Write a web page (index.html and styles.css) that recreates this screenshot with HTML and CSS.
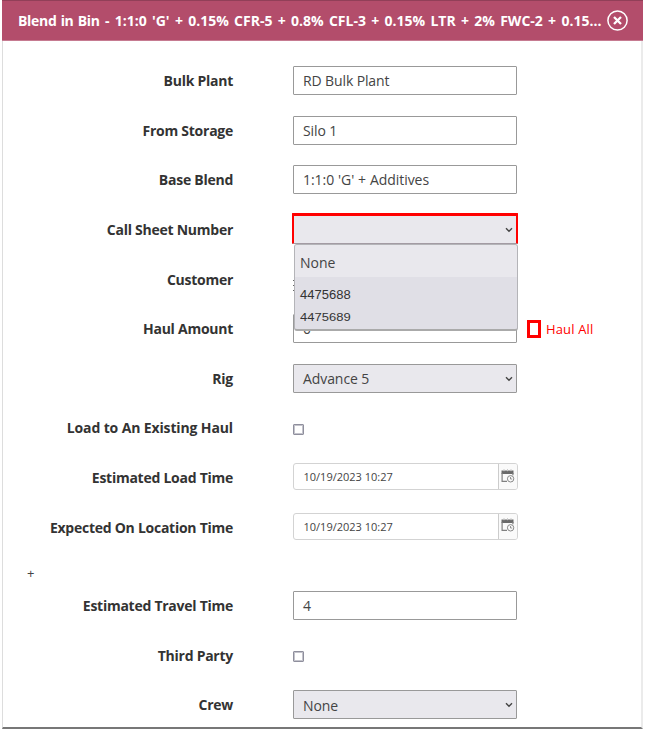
FILE: index.html
```html
<!DOCTYPE html>
<html lang="en">
<head>
<meta charset="utf-8">
<title>Blend in Bin</title>
<link rel="stylesheet" href="styles.css">
</head>
<body>
<svg class="defs" width="0" height="0" aria-hidden="true">
  <symbol id="chevron" viewBox="0 0 8 6"><path d="M1 1.2 4 4.2 7 1.2" fill="none" stroke="#444" stroke-width="1.4"/></symbol>
  <symbol id="calendar" viewBox="0 0 14 14">
    <path d="M.5 1.5h12V5H.5z" fill="#6a6a6a"/>
    <path d="M3 0v2.2M6.5 0v2.2M10 0v2.2" stroke="#ccc" stroke-width="1"/>
    <path d="M1.1 4v8.4H6M11.9 4v2.3" fill="none" stroke="#808080" stroke-width="1.2"/>
    <circle cx="9.6" cy="9.8" r="3.2" fill="#fafafa" stroke="#888" stroke-width="1"/>
    <path d="M9.5 8v2h1.7" fill="none" stroke="#888" stroke-width=".9"/>
  </symbol>
</svg>
<main class="dialog">
  <header class="titlebar">
    <h1 class="title"><span class="name">Blend in Bin</span> - 1:1:0 'G' + 0.15% CFR-5 + 0.8% CFL-3 + 0.15% LTR + 2% FWC-2 + 0.15...</h1>
    <svg class="close" viewBox="0 0 21 21"><circle cx="10.5" cy="10.5" r="9.6" fill="none" stroke="#fff" stroke-width="1.5"/><path d="m7 7 7 7m0-7-7 7" stroke="#fff" stroke-width="2.3"/></svg>
  </header>
  <form class="form">
    <div class="row"><label class="label">Bulk Plant</label><div class="box">RD Bulk Plant</div></div>
    <div class="row"><label class="label">From Storage</label><div class="box">Silo 1</div></div>
    <div class="row"><label class="label">Base Blend</label><div class="box wide">1:1:0 'G' + Additives</div></div>
    <div class="row"><label class="label">Call Sheet Number</label>
      <div class="box select invalid"><svg class="chevron"><use href="#chevron"/></svg>
        <div class="menu">
          <div class="option first">None</div>
          <div class="option">4475688</div>
          <div class="option clipped"><span class="squash">4475689</span></div>
        </div>
      </div>
    </div>
    <div class="row"><label class="label">Customer</label><span class="customer"></span></div>
    <div class="row"><label class="label">Haul Amount</label><div class="box amount">0</div><span class="haul-check"></span><span class="haul-all">Haul All</span></div>
    <div class="row"><label class="label">Rig</label><div class="box select">Advance 5<svg class="chevron"><use href="#chevron"/></svg></div></div>
    <div class="row"><label class="label long">Load to An Existing Haul</label><span class="check"></span></div>
    <div class="row"><label class="label">Estimated Load Time</label><div class="date"><span class="date-text">10/19/2023 10:27</span><span class="date-button"><svg class="calendar"><use href="#calendar"/></svg></span></div></div>
    <div class="row"><label class="label">Expected On Location Time</label><div class="date"><span class="date-text">10/19/2023 10:27</span><span class="date-button"><svg class="calendar"><use href="#calendar"/></svg></span></div></div>
    <div class="expander">+</div>
    <div class="row"><label class="label">Estimated Travel Time</label><div class="box">4</div></div>
    <div class="row"><label class="label">Third Party</label><span class="check"></span></div>
    <div class="row"><label class="label">Crew</label><div class="box select">None<svg class="chevron"><use href="#chevron"/></svg></div></div>
  </form>
</main>
</body>
</html>
```
FILE: styles.css
```css
* { box-sizing: border-box; }
body { margin: 0; background: #fff; font-family: "Open Sans", "Noto Sans", sans-serif; color: #444; overflow: hidden; }
.defs { position: absolute; }
.dialog { width: 641px; height: 729px; margin-left: 2px; border-left: 1px solid #ddd; border-right: 2px solid #ebebeb; border-bottom: 2px solid #777; }
.titlebar { display: flex; align-items: center; height: 41px; margin: 0 -2px 0 -1px; padding: 0 15px 0 16px; background: #b34d6b; border-top: 1px solid #913f58; border-bottom: 1px solid #c67b91; }
.title { margin: 0; width: 589px; font-size: 14px; line-height: 20px; font-weight: 700; letter-spacing: 0; word-spacing: 1.65px; color: #fff; white-space: nowrap; }
.name { letter-spacing: -.3px; word-spacing: .8px; }
.close { flex: none; width: 21px; height: 21px; }
.form { padding-top: 15px; }
.row { display: flex; align-items: center; height: 49.6px; }
.label { flex: none; width: 230px; margin-right: 60px; text-align: right; font-size: 14px; letter-spacing: -.26px; font-weight: 700; color: #333; white-space: nowrap; }
.long { letter-spacing: -.13px; }
.box { position: relative; display: flex; align-items: center; flex: none; width: 224px; height: 29px; padding: 1px 9px 0; border: 1px solid #999; border-radius: 1px; font-size: 14px; line-height: 20px; letter-spacing: -.12px; white-space: nowrap; }
.wide { letter-spacing: -.05px; word-spacing: .3px; }
.select { background: #e9e8ed; padding-top: 2px; letter-spacing: -.08px; }
.chevron { position: absolute; right: 3px; top: 11px; width: 8px; height: 6px; }
.invalid { z-index: 2; width: 226px; height: 31px; margin: -2px -1px 0; border: 2px solid red; border-top-width: 3px; border-bottom: 1px solid #a39ba3; }
.menu { position: absolute; left: 0; top: 28px; width: 224px; height: 87px; border: 1px solid #b4b4b8; border-bottom: 2px solid #aaa; border-radius: 3px; overflow: hidden; background: #e0dfe6; }
.option { height: 33px; padding-left: 5px; font: 13px/35px "Liberation Sans", sans-serif; letter-spacing: 0; color: #333; }
.first { height: 32px; background: #e9e8ed; font: 14px/35px "Open Sans", sans-serif; color: #444; }
.clipped { height: 16px; line-height: 16px; }
.squash { display: inline-block; transform: scaleY(.83); }
.customer { width: 2px; height: 11px; margin-top: 12px; background: repeating-linear-gradient(#666 0 1px, transparent 1px 5px); }
.haul-check { width: 14px; height: 18px; margin-left: 10px; border: 3px solid red; }
.amount { padding-top: 0; }
.haul-all { margin-left: 5px; font-size: 13px; letter-spacing: .15px; color: red; }
.check { width: 11px; height: 11px; margin-top: 3px; border: 1px solid #8f8f9d; border-radius: 1px; box-shadow: inset 0 0 0 1px #c4c4cc; }
.date { display: flex; width: 225px; height: 27px; margin-top: -2px; border: 1px solid #d3d3d3; border-radius: 3px; overflow: hidden; }
.date-text { width: 204px; padding-left: 9.5px; font-size: 11px; line-height: 26px; }
.date-button { display: flex; flex: 1; align-items: center; justify-content: center; background: #fafafa; border-left: 1px solid #ccc; }
.calendar { width: 14px; height: 14px; margin-top: -2px; }
.expander { height: 28.8px; padding: 9px 0 0 24px; font-size: 13px; line-height: 24px; }
```
